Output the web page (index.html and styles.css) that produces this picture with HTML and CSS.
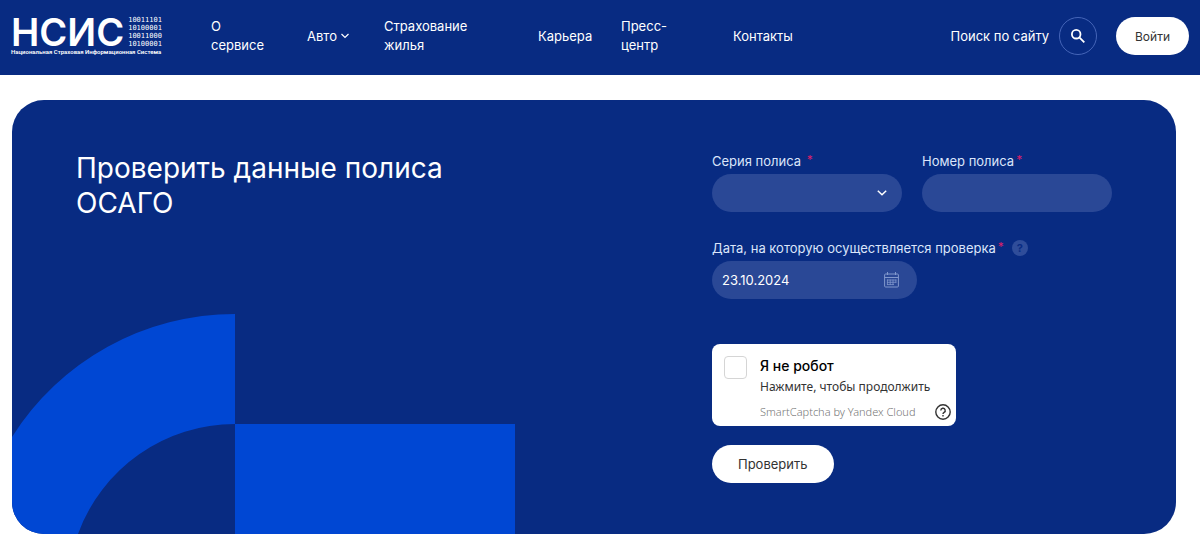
FILE: index.html
```html
<!DOCTYPE html>
<html lang="ru">
<head>
  <meta charset="UTF-8">
  <meta name="viewport" content="width=device-width, initial-scale=1.0">
  <title>НСИС</title>
  <link rel="stylesheet" href="styles.css">
</head>
<body>

  <!-- Header -->
  <header class="header">
    <a class="logo" href="#">
      <span class="logo-top">
        <span class="logo-name">НСИС</span>
        <span class="logo-code">10011101<br>10100001<br>10011000<br>10100001</span>
      </span>
      <span class="logo-tagline">Национальная Страховая Информационная Система</span>
    </a>

    <nav class="nav">
      <a href="#">О сервисе</a>
      <a class="nav-drop" href="#">Авто
        <svg width="8" height="6" viewBox="0 0 8 6" fill="none" stroke="currentColor" stroke-width="1.2"><path d="M0.5 1l3.5 3.5L7.5 1"/></svg>
      </a>
      <a href="#">Страхование жилья</a>
      <a href="#">Карьера</a>
      <a href="#">Пресс-центр</a>
      <a href="#">Контакты</a>
    </nav>

    <div class="actions">
      <label for="search-btn">Поиск по сайту</label>
      <button class="search-btn" id="search-btn" type="button">
        <svg width="16" height="16" viewBox="0 0 16 16" fill="none" stroke="currentColor" stroke-width="1.8"><circle cx="6.2" cy="6.2" r="4.3"/><path d="M9.3 9.3l5 5"/></svg>
      </button>
      <button class="btn login-btn" type="button">Войти</button>
    </div>
  </header>

  <!-- Policy check -->
  <main class="card">
    <svg class="card-shape" width="503" height="220" viewBox="0 0 503 220" fill="#0047d3">
      <path d="M0 123A264 264 0 0 1 223 0V110A167 167 0 0 0 66 220H0z"/>
      <path d="M223 110h280v110H223z"/>
    </svg>

    <h1>Проверить данные полиса ОСАГО</h1>

    <form class="form">
      <div class="row">
        <div class="field">
          <label for="series">Серия полиса <span class="req">*</span></label>
          <div class="control">
            <select id="series"><option></option></select>
            <svg class="chevron" width="10" height="6" viewBox="0 0 10 6" fill="none" stroke="currentColor" stroke-width="1.5"><path d="M0.8 0.8L5 4.8l4.2-4"/></svg>
          </div>
        </div>
        <div class="field">
          <label for="number">Номер полиса<span class="req">*</span></label>
          <input id="number" type="text">
        </div>
      </div>

      <div class="field">
        <div class="label-row">
          <label for="date">Дата, на которую осуществляется проверка<span class="req">*</span></label>
          <button class="hint" type="button">?</button>
        </div>
        <div class="control date">
          <input id="date" type="text" value="23.10.2024">
          <svg class="calendar" width="15" height="16" viewBox="0 0 15 16" fill="none" stroke="currentColor">
            <rect x="0.6" y="2" width="13.8" height="13" rx="1"/>
            <path d="M0.6 5.5h13.8M3.5 0v3M11.5 0v3"/>
            <path d="M3 8h9.4M3 10.3h9.4M3 12.6h7M3.4 7.5v5.5M6.2 7.5v5.5M9 7.5v5.5M11.9 7.5v3.2" stroke-width="0.8"/>
          </svg>
        </div>
      </div>

      <div class="captcha">
        <input id="robot" type="checkbox">
        <div class="captcha-text">
          <label for="robot">Я не робот</label>
          <p>Нажмите, чтобы продолжить</p>
          <a href="#">SmartCaptcha by Yandex Cloud</a>
        </div>
        <button class="captcha-help" type="button">
          <svg width="16" height="16" viewBox="0 0 16 16" fill="none" stroke="currentColor" stroke-width="1.4"><circle cx="8" cy="8" r="7.2"/><path d="M5.8 6.4a2.2 2.2 0 1 1 3.3 1.9c-.8.5-1.1.8-1.1 1.6M8 11v1.5"/></svg>
        </button>
      </div>

      <button class="btn submit-btn" type="submit">Проверить</button>
    </form>
  </main>

</body>
</html>
```
FILE: styles.css
```css
* {
  margin: 0;
  padding: 0;
  box-sizing: border-box;
}

body {
  font-family: Inter, sans-serif;
  font-size: 13px;
  background: #fff;
  color: #fff;
}

a {
  color: inherit;
  text-decoration: none;
}

button, input, select {
  font: inherit;
  color: inherit;
  border: none;
}

button {
  cursor: pointer;
}

/* Header */
.header {
  display: flex;
  align-items: center;
  background: #082b82;
  padding: 16px 11px 19px;
}

.logo {
  width: 152px;
  margin-right: 48px;
}

.logo-top {
  display: flex;
  align-items: center;
  gap: 4px;
}

.logo-name {
  font-size: 38px;
  font-weight: 600;
  line-height: 30px;
}

.logo-code {
  font-family: "DejaVu Sans Mono", monospace;
  font-size: 7px;
  line-height: 8px;
}

.logo-tagline {
  display: block;
  font-family: Roboto, sans-serif;
  font-size: 6px;
  font-weight: 600;
  line-height: 8px;
  white-space: nowrap;
}

.nav {
  display: grid;
  grid-template-columns: 64px 45px 122px 51px 80px auto;
  gap: 32px;
  align-items: center;
  line-height: 19px;
}

.nav-drop {
  display: flex;
  align-items: center;
  gap: 4px;
}

.actions {
  display: flex;
  align-items: center;
  margin-left: auto;
}

.search-btn {
  display: flex;
  align-items: center;
  justify-content: center;
  width: 38px;
  height: 38px;
  margin: 0 19px 0 10px;
  background: none;
  border: 1px solid #4565b8;
  border-radius: 50%;
}

.btn {
  height: 38px;
  background: #fff;
  color: #333;
  border-radius: 19px;
}

.login-btn {
  padding: 0 19px;
  font-size: 12px;
}

/* Card */
.card {
  position: relative;
  display: flex;
  justify-content: space-between;
  margin: 25px 24px 12px 12px;
  padding: 51px 64px;
  background: #082b82;
  border-radius: 32px;
  overflow: hidden;
}

.card-shape {
  position: absolute;
  left: 0;
  bottom: 0;
}

h1 {
  max-width: 400px;
  font-size: 28px;
  font-weight: 400;
  line-height: 35px;
}

.form {
  width: 400px;
}

.row {
  display: grid;
  grid-template-columns: 1fr 1fr;
  gap: 20px;
  margin-bottom: 26px;
}

.field label {
  display: block;
  line-height: 20px;
  margin-bottom: 3px;
  color: #dbe5fa;
}

.req {
  margin-left: 2px;
  color: #d81e6a;
  font-size: 12px;
  line-height: 18px;
  vertical-align: top;
}

.label-row {
  display: flex;
  gap: 8px;
}

.hint {
  width: 16px;
  height: 16px;
  margin-top: 2px;
  border-radius: 50%;
  background: #2f4d9a;
  color: #082b82;
  font-size: 11px;
  font-weight: 700;
}

.control {
  position: relative;
}

.date {
  width: 205px;
}

.field input, .field select {
  display: block;
  appearance: none;
  width: 100%;
  height: 38px;
  padding: 0 10px;
  background: #2a4896;
  border-radius: 19px;
}

.chevron {
  position: absolute;
  top: 16px;
  right: 15px;
  pointer-events: none;
}

.calendar {
  position: absolute;
  top: 11px;
  right: 18px;
  color: #8198cd;
}

/* Captcha */
.captcha {
  display: flex;
  width: 244px;
  margin: 45px 0 19px;
  padding: 12px 5px 4px 12px;
  background: #fff;
  color: #333;
  border-radius: 8px;
  font-family: "Noto Sans", sans-serif;
  font-size: 12px;
}

.captcha input {
  appearance: none;
  width: 23px;
  height: 23px;
  margin-right: 13px;
  border: 1px solid #d5d5d5;
  border-radius: 4px;
}

.captcha-text {
  flex: 1;
  white-space: nowrap;
}

.captcha label {
  display: block;
  font-family: Inter, sans-serif;
  font-size: 14px;
  font-weight: 500;
  line-height: 20px;
  color: #000;
}

.captcha p {
  line-height: 22px;
}

.captcha a {
  display: block;
  margin-top: 4px;
  font-size: 11px;
  font-weight: 300;
  line-height: 20px;
  color: #777;
}

.captcha-help {
  align-self: flex-end;
  height: 18px;
  background: none;
  color: #333;
}

.submit-btn {
  padding: 0 26px;
}
```
